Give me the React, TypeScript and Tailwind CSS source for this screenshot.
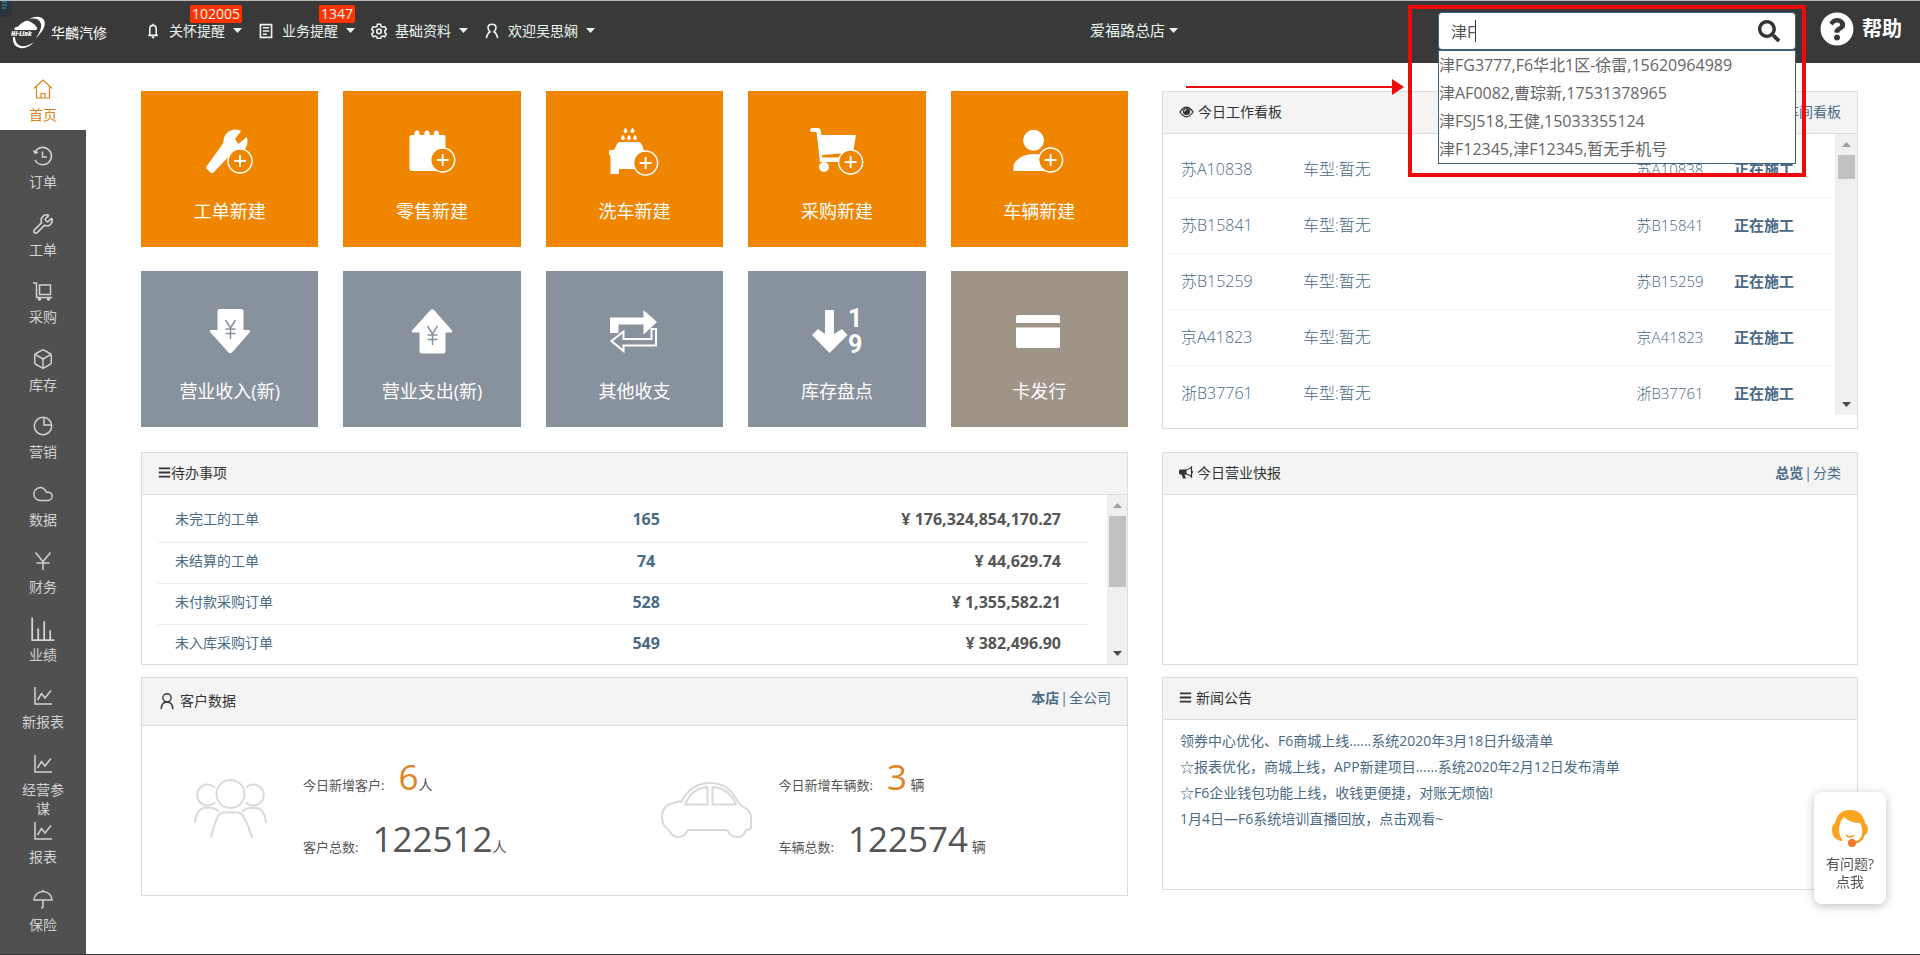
import type { ReactNode } from "react";
import { Box, Cloud, Wrench } from "lucide-react";
import { FaBars, FaQuestionCircle, FaSearch } from "react-icons/fa";

const plates = ["苏A10838", "苏B15841", "苏B15259", "京A41823", "浙B37761"];

const todos = [
  { name: "未完工的工单", count: "165", amount: "176,324,854,170.27" },
  { name: "未结算的工单", count: "74", amount: "44,629.74" },
  { name: "未付款采购订单", count: "528", amount: "1,355,582.21" },
  { name: "未入库采购订单", count: "549", amount: "382,496.90" },
];

const news = [
  "领券中心优化、F6商城上线......系统2020年3月18日升级清单",
  "☆报表优化，商城上线，APP新建项目......系统2020年2月12日发布清单",
  "☆F6企业钱包功能上线，收钱更便捷，对账无烦恼!",
  "1月4日—F6系统培训直播回放，点击观看~",
];

const suggestions = [
  "津FG3777,F6华北1区-徐雷,15620964989",
  "津AF0082,曹琮新,17531378965",
  "津FSJ518,王健,15033355124",
  "津F12345,津F12345,暂无手机号",
];

function LineIcon({ children, size = 20 }: { children: ReactNode; size?: number }) {
  return (
    <svg
      width={size}
      height={size}
      viewBox="0 0 20 20"
      fill="none"
      stroke="currentColor"
      strokeWidth="1.5"
      aria-hidden="true"
    >
      {children}
    </svg>
  );
}

const lineChart = (
  <LineIcon>
    <path d="M2 1v17h17M4.500 14l4-6.500 3.500 4.500L18 4.500" />
  </LineIcon>
);

const menu = [
  {
    name: "首页",
    icon: (
      <LineIcon>
        <path
          strokeWidth="1.200"
          d="M.8 9.500 10 1l9.200 8.500M3.500 7.500V19h13V7.500M8 19v-4.500h4V19"
        />
      </LineIcon>
    ),
  },
  {
    name: "订单",
    icon: (
      <LineIcon>
        <path d="M2 6.200A8.700 8.700 0 1 1 2 14M.5 4.500l1.700 2.700L5 6M9.500 5.500V11H14" />
      </LineIcon>
    ),
  },
  { name: "工单", icon: <Wrench size={22} strokeWidth={1.8} /> },
  {
    name: "采购",
    icon: (
      <LineIcon>
        <path d="M0 2h3.500v14.500H19M6.500 4h11v9.500h-11z" />
        <circle cx="6.500" cy="18" r="1" fill="currentColor" />
        <circle cx="15.500" cy="18" r="1" fill="currentColor" />
      </LineIcon>
    ),
  },
  { name: "库存", icon: <Box size={22} strokeWidth={1.6} /> },
  {
    name: "营销",
    icon: (
      <LineIcon>
        <circle cx="10" cy="10" r="8.700" />
        <path d="M11 1.500V9h7.500" />
      </LineIcon>
    ),
  },
  { name: "数据", icon: <Cloud size={22} strokeWidth={1.6} /> },
  {
    name: "财务",
    icon: (
      <LineIcon>
        <path d="m2.500 1.500 7.500 9 7.500-9M10 10.500V19M3.500 12h13" />
      </LineIcon>
    ),
  },
  {
    name: "业绩",
    icon: (
      <LineIcon size={24}>
        <path d="M1 .5v18.700h18.500M6 19V9.500M11 19V3.500M16 19v-8" />
      </LineIcon>
    ),
  },
  { name: "新报表", icon: lineChart },
  { name: "经营参谋", icon: lineChart },
  { name: "报表", icon: lineChart },
  {
    name: "保险",
    icon: (
      <LineIcon>
        <path d="M1 11a9 8.500 0 0 1 18 0zM10 2.500V.8M10 11v6c0 1.500-.8 2-2 2" />
      </LineIcon>
    ),
  },
];

function Plus({ x, y, color }: { x: number; y: number; color: string }) {
  return (
    <g stroke="#fff" strokeWidth="1.500">
      <circle cx={x} cy={y} r="12" fill={color} />
      <path strokeWidth="2" d={`M${x - 6} ${y}h12M${x} ${y - 6}v12`} />
    </g>
  );
}

const orange = "#f08500";
const slate = "#88929d";

const tiles = [
  {
    name: "工单新建",
    bg: "bg-[#f08500]",
    icon: (
      <>
        <circle cx="29.500" cy="14.500" r="12" />
        <path d="M.5 39.500 18 15l10 9L7.500 45.500q-1.500 1-3 0l-4-4z" />
        <path fill={orange} d="m37.500 1-8.500 11 3.500 5L44 7z" />
        <Plus x={34} y={34} color={orange} />
      </>
    ),
  },
  {
    name: "零售新建",
    bg: "bg-[#f08500]",
    icon: (
      <>
        <rect x="1.500" y="8" width="36" height="36" rx="2" />
        <path
          stroke="#fff"
          strokeWidth="5"
          strokeLinecap="round"
          d="M9 6v4M19 6v4M28.500 6v4"
        />
        <Plus x={34.7} y={33} color={orange} />
      </>
    ),
  },
  {
    name: "洗车新建",
    bg: "bg-[#f08500]",
    icon: (
      <>
        <path d="M10 15h19q2 0 3 3l3 8v16H9v5H.5V29L-1 27v-3l1-1h4l3-6q1-2 3-2z" />
        <path d="m15.500.5 2 3.500q0 2-2 2t-2-2zM22.500.5l2 3.500q0 2-2 2t-2-2zM13 7.500l2 3.500q0 2-2 2t-2-2zM19 7.500l2 3.500q0 2-2 2t-2-2zM25 7.500l2 3.500q0 2-2 2t-2-2z" />
        <Plus x={35.6} y={36} color={orange} />
      </>
    ),
  },
  {
    name: "采购新建",
    bg: "bg-[#f08500]",
    icon: (
      <>
        <path d="M-1 1h6q2 0 2.500 2l.8 5H43l-3 17.500-31 2.500.4 2.500H36V35H7L3.500 5H-1q-2 0-2-2t2-2z" />
        <circle cx="11" cy="40" r="5" />
        <Plus x={37.6} y={35} color={orange} />
      </>
    ),
  },
  {
    name: "车辆新建",
    bg: "bg-[#f08500]",
    icon: (
      <>
        <circle cx="18.600" cy="13.300" r="10.500" />
        <path d="M-1.500 44v-6Q4 27 19 27t19 17z" />
        <Plus x={35.6} y={33} color={orange} />
      </>
    ),
  },
  {
    name: "营业收入(新)",
    bg: "bg-[#88929d]",
    icon: (
      <>
        <path d="M13.500 2h22q2 0 2 2v19H43q2 0 1 2L26 45.500q-2 1.500-3.500 0L4 25q-1-2 1-2h6.500V4q0-2 2-2z" />
        <path fill="none" stroke={slate} strokeWidth="1.500" d="m19.500 13 5 8 5-8M24.500 21v11M19.500 22h10M19.500 26.500h10" />
      </>
    ),
  },
  {
    name: "营业支出(新)",
    bg: "bg-[#88929d]",
    icon: (
      <>
        <path d="M13.500 46.500h22q2 0 2-2v-19H43q2 0 1-2L26 3q-2-1.500-3.500 0L4 23.500q-1 2 1 2h6.500v19q0 2 2 2z" />
        <path fill="none" stroke={slate} strokeWidth="1.500" d="m19.500 19 5 8 5-8M24.500 27v11M19.500 28h10M19.500 32.500h10" />
      </>
    ),
  },
  {
    name: "其他收支",
    bg: "bg-[#88929d]",
    icon: (
      <>
        <path d="M0 10.500h33.500V3L47 15 33.500 27.500v-10H8.500V26H0z" />
        <path fill="none" stroke="#fff" strokeWidth="2" d="M41.500 22H46v16.500H13.500V44L1.500 34l12-9.500v7.500h28z" />
      </>
    ),
  },
  {
    name: "库存盘点",
    bg: "bg-[#88929d]",
    icon: (
      <>
        <path d="M12 3h9v24l8-5 5.500 6-18 18L-1 28l6-6 7 5z" />
        <g fontFamily="Roboto" fontSize="25" fontWeight="700">
          <text x="35" y="20">
            1
          </text>
          <text x="35" y="46">
            9
          </text>
        </g>
      </>
    ),
  },
  {
    name: "卡发行",
    bg: "bg-[#9e9588]",
    icon: (
      <>
        <path d="M3 8h40q2 0 2 2v6H1v-6q0-2 2-2zM1 20.500h44V39q0 2-2 2H3q-2 0-2-2z" />
      </>
    ),
  },
];

function Caret() {
  return (
    <svg width="9" height="5" viewBox="0 0 9 5" fill="currentColor" aria-hidden="true">
      <path d="M0 0h9L4.500 5z" />
    </svg>
  );
}

function ScrollBar({ thumb, width }: { thumb: string; width: string }) {
  return (
    <div className={`flex flex-col items-center justify-between bg-[#f0f0f0] py-2 text-[#4a4a4a] ${width}`}>
      <div className="flex w-full flex-col items-center gap-2">
        <svg width="9" height="5" viewBox="0 0 9 5" fill="#a0a0a0" aria-hidden="true">
          <path d="M0 5h9L4.500 0z" />
        </svg>
        <div className={`bg-[#c1c1c1] ${thumb}`} />
      </div>
      <Caret />
    </div>
  );
}

function NavItem({ icon, name, badge }: { icon: ReactNode; name: string; badge?: string }) {
  return (
    <button type="button" className="relative flex h-4 items-center gap-2 leading-[14px]">
      {icon}
      <span>{name}</span>
      <Caret />
      {badge ? (
        <span className="absolute -top-[18px] right-0 rounded-xs bg-[#ff3300] px-0.5 text-sm/[18px]">
          {badge}
        </span>
      ) : null}
    </button>
  );
}

function Panel({
  title,
  icon,
  aside,
  tall,
  tight,
  children,
}: {
  title: string;
  icon: ReactNode;
  aside?: ReactNode;
  tall?: boolean;
  tight?: boolean;
  children?: ReactNode;
}) {
  return (
    <section className="border border-[#dcdcdc] bg-white">
      <header
        className={`flex items-center justify-between border-b border-[#dcdcdc] bg-[#f4f4f4] px-4 pb-0.5 ${tall ? "h-12" : "h-[42px]"}`}
      >
        <h2 className={`flex items-center text-[#333] ${tight ? "" : "gap-1"}`}>
          {icon}
          {title}
        </h2>
        {aside}
      </header>
      {children}
    </section>
  );
}

function Stat({ label, value, unit, hot }: { label: string; value: string; unit: string; hot?: boolean }) {
  return (
    <p className="flex items-baseline whitespace-pre text-[#555]">
      <span className="mr-3.5 text-[13px]">{label}</span>
      <span className={`text-[35px]/[62px] ${hot ? "text-[#e08324]" : ""}`}>{value}</span>
      <span>{unit}</span>
    </p>
  );
}

export default function App() {
  return (
    <div className="flex min-h-screen flex-col border-b border-[#333] bg-white font-['Open_Sans','Noto_Sans_CJK_SC',sans-serif] text-sm text-[#4a6a85]">
      <div className="relative flex h-[63px] items-center border-t border-[#b5b8b5] bg-[#393939] pr-[18px] pb-[3px] pl-[11px] text-[#e8f5ee]">
        <div className="absolute top-0 left-0 h-4 w-3 rounded-br bg-[#2c333d]">
          <svg width="12" height="10" viewBox="0 0 12 10" stroke="#2f7f8c" strokeWidth="1.500" aria-hidden="true">
            <path d="M2 1h5M2 4h5M2 7h4" />
          </svg>
        </div>
        <a href="#" className="flex items-center gap-1.5 pt-1 text-white">
          <svg width="34" height="33" viewBox="0 0 34 33" fill="#fff" aria-hidden="true">
            <path d="M5 14q-3-.5-1-2.500l3-1Q12 5 17 4.500l6 3.500 3 3.500q1 2-2 2.500z" />
            <path d="M18 3Q28-2 33 4q3 6-5 15l-3 3q6-9 5-14-2-7-12-5zM2 21q-1 9 7 11 8 1 14-6-7 5-13 4-6-2-6-9z" />
            <text x="0" y="19.500" fontSize="6" fontWeight="800" fontStyle="italic">
              Hi-Link
            </text>
          </svg>
          <span>华麟汽修</span>
        </a>
        <nav className="flex items-center gap-4 pl-[38px]">
          <NavItem
            name="关怀提醒"
            badge="102005"
            icon={
              <LineIcon size={16}>
                <path strokeWidth="2" d="M4 15.500h12M6 15V7.500Q6 3 10 3t4 4.500V15M10 3V1M8.500 18h3" />
              </LineIcon>
            }
          />
          <NavItem
            name="业务提醒"
            badge="1347"
            icon={
              <LineIcon size={16}>
                <path strokeWidth="2" d="M3 2h14v16H3zM6 6h8M6 10h8M6 14h5" />
              </LineIcon>
            }
          />
          <NavItem
            name="基础资料"
            icon={
              <LineIcon size={16}>
                <path
                  strokeWidth="2"
                  d="M8 1.500h4l.6 2.700 2 1.100 2.600-.8 2 3.400-2 1.900v2l2 1.900-2 3.400-2.600-.8-2 1.100-.6 2.100H8l-.6-2.100-2-1.100-2.600.8-2-3.400 2-1.900v-2l-2-1.900 2-3.400 2.600.8 2-1.100z"
                />
                <circle cx="10" cy="10.500" r="2.800" strokeWidth="2" />
              </LineIcon>
            }
          />
          <NavItem
            name="欢迎吴思娴"
            icon={
              <LineIcon size={16}>
                <path strokeWidth="2" d="M3 19q1-6 4.500-8Q5 9 5 6q0-4.500 5-4.500T15 6q0 3-2.500 5 3.500 2 4.500 8" />
              </LineIcon>
            }
          />
        </nav>
        <button type="button" className="mr-[260px] ml-auto flex items-center gap-1 text-[15px]">
          爱福路总店
          <Caret />
        </button>
        <div className="relative h-[38px] w-[358px]">
          <input
            type="text"
            aria-label="搜索"
            defaultValue="津F"
            className="h-full w-full rounded-sm border border-[#3f6079] bg-white px-3 text-base text-[#555] outline-none"
          />
          <span className="absolute top-2 left-[37px] h-[22px] w-px bg-[#333]" />
          <button type="button" aria-label="查询" className="absolute top-2 right-4 text-[#333]">
            <FaSearch size={22} />
          </button>
          <ul className="absolute top-full left-0 z-20 w-full border border-[#3f6079] bg-white text-base/7 text-[#666]">
            {suggestions.map((s) => (
              <li key={s}>{s}</li>
            ))}
          </ul>
          {/* highlight frame and the arrow pointing at it */}
          <div className="pointer-events-none absolute -top-[7px] -left-[30px] z-30 h-[172px] w-[398px] border-4 border-[#ee0a0a]" />
          <svg
            className="absolute top-[67px] right-full z-30 mr-[34px]"
            width="218"
            height="16"
            viewBox="0 0 218 16"
            fill="#ee0a0a"
            aria-hidden="true"
          >
            <path d="M0 7h206V0l12 8-12 8V9H0z" />
          </svg>
        </div>
        <a href="#" className="ml-6 flex items-center gap-2 pb-1 text-xl font-bold text-white">
          <FaQuestionCircle size={34} />
          帮助
        </a>
      </div>

      <div className="flex flex-1">
        <nav className="flex w-[86px] shrink-0 flex-col bg-[#505050] pb-3.5 text-[#d2d2d2]">
          {menu.map((m, i) => (
            <a
              key={m.name}
              href="#"
              className={`flex h-0 grow flex-col items-center pt-3.5 text-center ${i === 0 ? "bg-white text-[#e08324]" : ""}`}
            >
              <span className="flex h-6 shrink-0 items-center">{m.icon}</span>
              <span className="w-12 pt-1 leading-[19px]">{m.name}</span>
            </a>
          ))}
        </nav>

        <main className="grid flex-1 grid-cols-[987fr_696fr] items-start gap-[34px] pt-7 pr-[62px] pl-[55px]">
          <div className="flex flex-col gap-3">
            <div className="mb-[13px] grid grid-cols-5 gap-x-[25px] gap-y-6">
              {tiles.map((t) => (
                <button
                  key={t.name}
                  type="button"
                  className={`flex h-[156px] flex-col items-center pt-9 text-lg/6 text-white ${t.bg}`}
                >
                  <svg width="48" height="48" viewBox="0 0 48 48" fill="#fff" className="overflow-visible" aria-hidden="true">
                    {t.icon}
                  </svg>
                  <span className="mt-6">{t.name}</span>
                </button>
              ))}
            </div>

            <Panel title="待办事项" icon={<FaBars size={13} />} tight>
              <div className="flex h-[169px] overflow-hidden">
                <div className="flex-1 pt-1.5 pr-[18px] pl-4">
                  <table className="w-full table-fixed">
                    <tbody>
                      {todos.map((t) => (
                        <tr key={t.name} className="h-[41px] border-b border-[#ececec] last:border-0">
                          <td className="w-[42%] pb-1 pl-[17px]">
                            <a href="#">{t.name}</a>
                          </td>
                          <td className="w-1/5 pb-1 pl-2 text-center text-base font-bold">{t.count}</td>
                          <td className="pr-7 pb-1 text-right text-base font-bold text-[#555]">¥ {t.amount}</td>
                        </tr>
                      ))}
                    </tbody>
                  </table>
                </div>
                <ScrollBar width="w-5" thumb="h-[71px] w-[17px]" />
              </div>
            </Panel>

            <Panel
              title="客户数据"
              icon={
                <LineIcon size={18}>
                  <circle cx="10" cy="6.500" r="4.600" />
                  <path d="M3.500 19q.5-7.900 6.500-7.900t6.500 7.900" />
                </LineIcon>
              }
              tall
              aside={
                <div className="flex pb-1.5">
                  <a href="#" className="font-bold">
                    本店
                  </a>
                  <span className="px-px">|</span>
                  <a href="#">全公司</a>
                </div>
              }
            >
              <div className="grid h-[169px] grid-cols-2 pt-5">
                <div className="flex gap-[35px] pl-[52px]">
                  <svg className="mt-[33px]" width="74" height="60" viewBox="0 0 74 60" fill="none" stroke="#d9d9d9" strokeWidth="2" strokeLinecap="round" aria-hidden="true">
                    <circle cx="36.500" cy="15" r="14" />
                    <path d="M20.500 8A10.500 10.500 0 1 0 20.500 24M52.500 8A10.500 10.500 0 1 1 52.500 24" />
                    <path d="M17 58q4-15 7-21 2-3.500 6-3.500h13q4 0 6 3.500 4 6 9 21M1 43q2-14 10-14 9-1 13 3M72 43q-2-14-10-14-9-1-13 3" />
                  </svg>
                  <div>
                    <Stat label="今日新增客户:" value="6" unit="人" hot />
                    <Stat label="客户总数:" value="122512" unit="人" />
                  </div>
                </div>
                <div className="flex gap-[27px] pl-[26px]">
                  <svg className="mt-9" width="91" height="56" viewBox="0 0 91 56" fill="none" stroke="#d9d9d9" strokeWidth="2" strokeLinejoin="round" aria-hidden="true">
                    <path d="M20 20Q30 1 49 1t28 19q3 4 8 6.500 5 3 5 9.500v9q0 3-5 3-2 7-9 7t-9-6q-1-1-3-1H29q-2 0-3 1-2 6-9 6-6 0-9-7-7-4-7-13 0-10 8-13 6-2 11-3z" />
                    <path d="M24 22.500Q31 6 46.500 5v17.500zM51.500 5Q68 6 75 22.500H51.500z" />
                  </svg>
                  <div>
                    <Stat label="今日新增车辆数:" value="3" unit=" 辆" hot />
                    <Stat label="车辆总数:" value="122574" unit=" 辆" />
                  </div>
                </div>
              </div>
            </Panel>
          </div>

          <div className="flex flex-col gap-3">
            <div className="mb-[11px]">
              <Panel
                title="今日工作看板"
                icon={
                  <svg width="15" height="12" viewBox="0 0 15 12" aria-hidden="true">
                    <path fill="none" stroke="#333" strokeWidth="1.300" d="M1 6q6.500-9.500 13 0-6.500 9.500-13 0z" />
                    <circle cx="7.500" cy="5.500" r="3.600" fill="#333" />
                    <path fill="none" stroke="#fff" d="M5.500 5.500q0-2 2-2" />
                  </svg>
                }
                aside={<a href="#">车间看板</a>}
              >
                <div className="mb-[13px] flex h-[281px] overflow-hidden">
                  <table className="mt-[7px] mr-[3px] ml-1 h-[280px] flex-1 table-fixed">
                    <tbody>
                      {plates.map((p) => (
                        <tr key={p} className="h-14 border-b border-[#f5f5f5] text-base font-light last:border-0">
                          <td className="w-[136px] pl-3.5">{p}</td>
                          <td>车型:暂无</td>
                          <td className="w-20 text-center text-[15px]">{p}</td>
                          <td className="w-[122px] pl-6 text-[15px] font-bold">正在施工</td>
                        </tr>
                      ))}
                    </tbody>
                  </table>
                  <ScrollBar width="w-[22px]" thumb="h-6 w-[17px]" />
                </div>
              </Panel>
            </div>

            <Panel
              title="今日营业快报"
              icon={
                <svg width="14" height="13" viewBox="0 0 14 13" aria-hidden="true">
                  <path fill="#333" d="M0 4.500 1 3.500h6v5H5.500l1.500 4H4l-1.500-4H1l-1-1z" />
                  <path fill="none" stroke="#333" strokeWidth="1.200" d="M7 4q3.500-.5 5.500-3v10q-2-2.500-5.500-3z" />
                  <path fill="#333" d="M12.500 4.500q1.500 0 1.500 1.500t-1.500 1.500z" />
                </svg>
              }
              aside={
                <div className="flex">
                  <a href="#" className="font-bold">
                    总览
                  </a>
                  <span className="px-px">|</span>
                  <a href="#">分类</a>
                </div>
              }
            >
              <div className="h-[169px]" />
            </Panel>

            <Panel title="新闻公告" icon={<FaBars size={13} />}>
              <ul className="h-[169px] px-[17px] pt-2 leading-[26px]">
                {news.map((n) => (
                  <li key={n}>
                    <a href="#">{n}</a>
                  </li>
                ))}
              </ul>
            </Panel>
          </div>
        </main>
      </div>

      <button
        type="button"
        className="fixed right-[34px] bottom-[51px] flex h-28 w-[72px] flex-col items-center rounded-lg bg-white pt-[18px] leading-[18px] text-[#555] shadow-[0_2px_10px_rgba(0,0,0,0.25)]"
      >
        <svg className="mb-2" width="36" height="37" viewBox="0 0 36 37" aria-hidden="true">
          <path fill="#fba41f" d="M18 0q12 0 15 13 3 2 3 6t-3 6l-3 2q1-9-2-14-10 0-16-6-4 4-5 11 0 8 4 13-5 0-8-3-3-2-3-9 0-4 3-6Q6 0 18 0z" />
          <path fill="none" stroke="#f59a23" strokeWidth="2.500" d="M32 23q-2 9-10 10" />
          <circle cx="20" cy="33" r="4" fill="#f0792b" />
          <path fill="none" stroke="#f59a23" strokeWidth="1.500" d="M14 25q4 4 8 0" />
        </svg>
        <span>
          有问题?
          <br />
          点我
        </span>
      </button>
    </div>
  );
}
